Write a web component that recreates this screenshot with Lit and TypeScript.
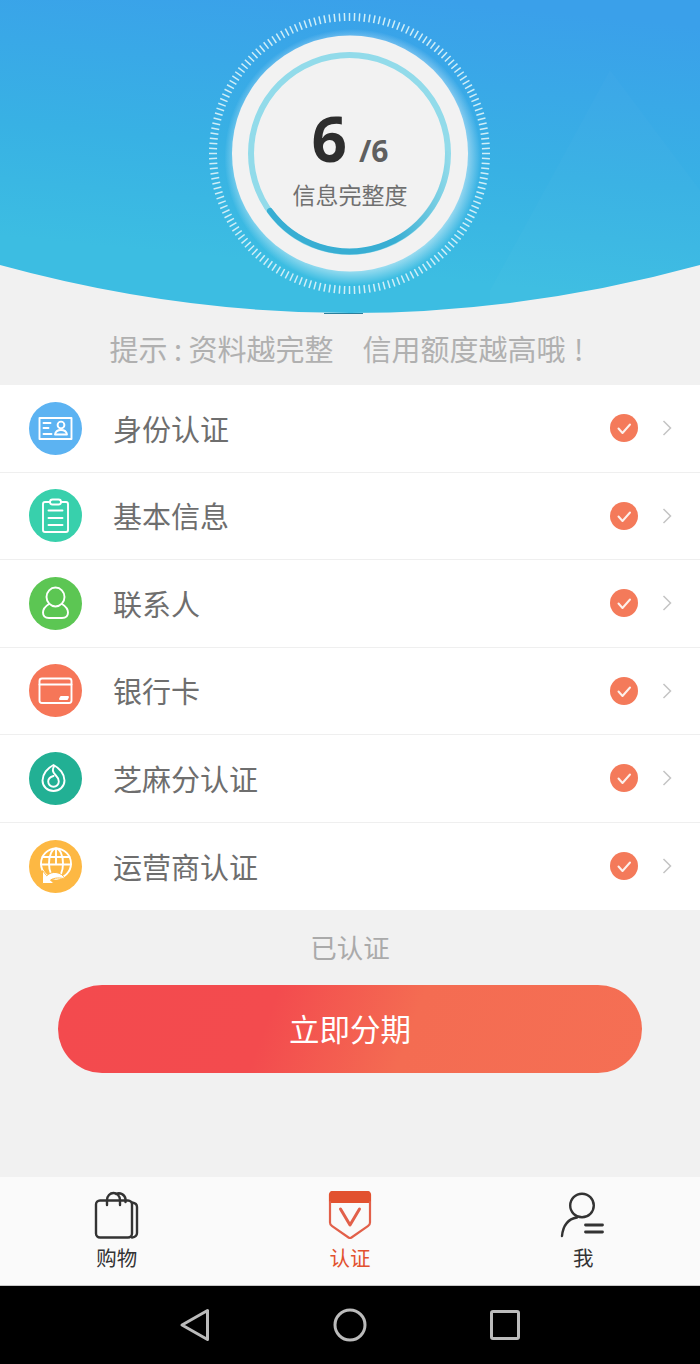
import { LitElement, html, css, svg } from 'lit';
import { customElement } from 'lit/decorators.js';

const rows = [
  {
    name: '身份认证',
    color: '#5cb3f2',
    icon: svg`<rect x="10.5" y="16" width="32" height="21" />
      <path d="M14.5 21h7M14.5 26h5M14.5 32h8" />
      <circle cx="32" cy="23" r="3.4" />
      <path d="M26 32.500c.5-3 3-4.500 6-4.500s5.500 1.500 6 4.500z" />`,
  },
  {
    name: '基本信息',
    color: '#38d0ac',
    icon: svg`<path d="M21 13h-5a2 2 0 0 0-2 2v26a2 2 0 0 0 2 2h21a2 2 0 0 0 2-2V15a2 2 0 0 0-2-2h-5" />
      <rect x="21" y="10.500" width="11" height="5" rx="2.500" />
      <path d="M19.500 21.500h14M19.500 29h14M19.500 36h14" />`,
  },
  {
    name: '联系人',
    color: '#5cc653',
    icon: svg`<ellipse cx="26.500" cy="20" rx="9" ry="9.500" />
      <path d="M20 27c-4 2.500-6 5.500-6 8.500 0 3.500 2.500 5.500 6 5.500h13c3.500 0 6-2 6-5.500 0-3-2-6-6-8.500" />`,
  },
  {
    name: '银行卡',
    color: '#f67658',
    icon: svg`<rect x="10.500" y="14.500" width="32" height="24.500" rx="2.500" />
      <path d="M10.500 20.500h32" />
      <path d="M31 35l1-2h7l-1 2z" style="fill:#fff" />`,
  },
  {
    name: '芝麻分认证',
    color: '#22b094',
    icon: svg`<path d="M24.500 13c6 3 11 9 11 15.500 0 6-5 10.500-11 10.500s-11-4.500-11-10.500C13.500 22 18.500 16 24.500 13z" />
      <path d="M25 14.500c-2.500 3.500-.5 6.500 1.500 8.500 2 2 3.300 4 3.300 6.500a5.300 5.300 0 0 1-10.600 0c0-2.300 2-4.500 5.300-5.500" />`,
  },
  {
    name: '运营商认证',
    color: '#fdb843',
    icon: svg`<circle cx="27" cy="23.500" r="15" />
      <ellipse cx="27" cy="23.500" rx="7" ry="15" />
      <path d="M27 8.500v15M13.500 17h27M12 24.500h30" />
      <path d="M13.500 31v12.500h11.500l-3.500-3.500c4-2.500 10-2.500 14.500-1-1.500-3.500-4.500-6-9-6.500-3.500-.3-6.500.5-9 3z" style="fill:#fff;stroke:#fdb843;stroke-width:1" />`,
  },
];

const ticks = Array.from({ length: 172 }, (_, i) => (i * 360) / 172);

@customElement('app-root')
export class AppRoot extends LitElement {
  static styles = css`
    :host {
      display: flex;
      flex-direction: column;
      width: 700px;
      height: 1364px;
      background: #f1f1f1;
      font-family: 'Noto Sans CJK SC', 'Noto Sans', sans-serif;
      overflow: hidden;
    }

    .hero {
      position: relative;
      height: 314px;
      flex: none;
    }

    .hero__bg {
      position: absolute;
      inset: 0;
      display: block;
    }

    .hero__dash {
      position: absolute;
      left: 324px;
      bottom: 0;
      width: 39px;
      height: 1px;
      background: #2b7f9c;
    }

    .gauge {
      position: absolute;
      inset: 0;
      display: flex;
      flex-direction: column;
      align-items: center;
      padding-top: 103px;
      box-sizing: border-box;
    }

    .gauge__score {
      display: flex;
      align-items: baseline;
      height: 70px;
      font-family: 'Open Sans', sans-serif;
      font-weight: 700;
      line-height: 70px;
    }

    .gauge__value {
      font-size: 62px;
      color: #2d2d2d;
    }

    .gauge__total {
      font-size: 30px;
      margin-left: 12px;
      color: #5f5f5f;
    }

    .gauge__label {
      font-size: 23px;
      line-height: 30px;
      margin-top: 6px;
      color: #707070;
    }

    .tip {
      height: 71px;
      box-sizing: border-box;
      padding: 0 7px 3px 0;
      display: flex;
      justify-content: center;
      align-items: center;
      gap: 29px;
      font-size: 29px;
      color: #b0b0b0;
      white-space: pre;
      flex: none;
    }

    .tip__end {
      word-spacing: 2px;
    }

    .list {
      flex: none;
      background: #fff;
    }

    .row {
      height: 87.500px;
      box-sizing: border-box;
      display: flex;
      align-items: center;
      padding: 0 28px 0 29px;
      border-bottom: 1px solid #efefef;
    }

    .row:last-child {
      border-bottom: none;
    }

    .row__icon {
      width: 53px;
      height: 53px;
      flex: none;
      display: block;
    }

    .row__icon path,
    .row__icon rect,
    .row__icon circle,
    .row__icon ellipse {
      fill: none;
      stroke: #fff;
      stroke-width: 1.900;
      stroke-linecap: round;
      stroke-linejoin: round;
    }

    .row__name {
      flex: 1;
      margin-left: 31px;
      padding-bottom: 1px;
      font-size: 29px;
      color: #6e6e6e;
    }

    .row__check {
      width: 28px;
      height: 28px;
      flex: none;
      display: block;
    }

    .row__chevron {
      width: 10px;
      height: 16px;
      flex: none;
      margin-left: 24px;
      display: block;
    }

    .status {
      height: 75px;
      box-sizing: border-box;
      padding-bottom: 2px;
      flex: none;
      display: flex;
      align-items: center;
      justify-content: center;
      font-size: 26.500px;
      color: #aaa;
    }

    .apply {
      flex: none;
      width: 584px;
      height: 88px;
      box-sizing: border-box;
      padding-bottom: 2px;
      margin-left: 58px;
      border-radius: 44px;
      background: linear-gradient(110deg, #f34a4e 0%, #f34b4e 36%, #f46c52 60%, #f56f54 100%);
      color: #fff;
      display: flex;
      align-items: center;
      justify-content: center;
      font-size: 30.500px;
    }

    .tabs {
      margin-top: 104px;
      flex: none;
      height: 109px;
      box-sizing: border-box;
      background: #fafafa;
      border-bottom: 1px solid #c8c8c8;
      display: grid;
      grid-template-columns: repeat(3, 1fr);
    }

    .tab {
      display: flex;
      flex-direction: column;
      align-items: center;
      padding-top: 14px;
      font-size: 20.500px;
      line-height: 26px;
      color: #333;
    }

    .tab--active {
      color: #e2512f;
    }

    .tab svg {
      display: block;
      width: 50px;
      height: 50px;
      margin-bottom: 3px;
    }

    .nav {
      flex: 1;
      background: #000;
      display: flex;
      align-items: center;
      justify-content: center;
      gap: 107px;
    }

    .nav svg {
      display: block;
      width: 48px;
      height: 48px;
    }
  `;

  renderHero() {
    return html`
      <svg class="hero__bg" width="700" height="314" viewBox="0 0 700 314">
        <defs>
          <linearGradient id="sky" x1="0.62" y1="0" x2="0.4" y2="1">
            <stop offset="0" stop-color="#3aa0ea" />
            <stop offset="0.5" stop-color="#38b1e4" />
            <stop offset="0.85" stop-color="#3cbde2" />
          </linearGradient>
          <linearGradient id="arc" gradientUnits="userSpaceOnUse" x1="262" y1="200" x2="452" y2="170">
            <stop offset="0" stop-color="#38aed3" />
            <stop offset="0.65" stop-color="#38aed3" />
            <stop offset="1" stop-color="#38aed3" stop-opacity="0" />
          </linearGradient>
          <radialGradient id="halo" gradientUnits="userSpaceOnUse" cx="352.500" cy="157" r="128">
            <stop offset="0.86" stop-color="#fff" stop-opacity="0.6" />
            <stop offset="1" stop-color="#fff" stop-opacity="0" />
          </radialGradient>
        </defs>
        <path d="M0 0H700V265Q350 361 0 265Z" fill="url(#sky)" />
        <path d="M490 290L610 70L700 190V265Q590 296 490 308Z" fill="#fff" opacity="0.015" />
        <circle cx="352.500" cy="157" r="128" fill="url(#halo)" />
        ${ticks.map(
          (deg) => svg`<line x1="349.500" y1="13" x2="349.500" y2="21" stroke="#cfeef8" stroke-width="1.500"
            transform="rotate(${deg} 349.500 153.500)" />`,
        )}
        <circle cx="350" cy="153.500" r="118" fill="#f2f2f2" />
        <circle cx="349.500" cy="153.500" r="98.500" fill="none" stroke="#92dbea" stroke-width="6" />
        <path d="M270 211A98.500 98.500 0 0 0 448 153.500" fill="none" stroke="url(#arc)" stroke-width="6" stroke-linecap="round" />
      </svg>
      <div class="hero__dash"></div>
      <div class="gauge">
        <div class="gauge__score">
          <span class="gauge__value">6</span>
          <span class="gauge__total">/6</span>
        </div>
        <div class="gauge__label">信息完整度</div>
      </div>
    `;
  }

  renderRow(row: (typeof rows)[number]) {
    return html`
      <div class="row">
        <svg class="row__icon" viewBox="0 0 53 53">
          <circle cx="26.500" cy="26.500" r="26.500" style="fill:${row.color};stroke:none" />
          ${row.icon}
        </svg>
        <div class="row__name">${row.name}</div>
        <svg class="row__check" viewBox="0 0 28 28">
          <circle cx="14" cy="14" r="14" fill="#f47a5a" />
          <path d="M8.500 14.500l4 4.500 7.500-8.500" fill="none" stroke="#fdf1ec" stroke-width="2" stroke-linecap="round" stroke-linejoin="round" />
        </svg>
        <svg class="row__chevron" viewBox="0 0 10 16">
          <path d="M1.500 1l7 7-7 7" fill="none" stroke="#c4c4c4" stroke-width="1.500" />
        </svg>
      </div>
    `;
  }

  render() {
    return html`
      <div class="hero">${this.renderHero()}</div>
      <div class="tip"><span>提示 : 资料越完整</span><span class="tip__end">信用额度越高哦 !</span></div>
      <div class="list">${rows.map((row) => this.renderRow(row))}</div>
      <div class="status">已认证</div>
      <div class="apply">立即分期</div>
      <div class="tabs">
        <div class="tab">
          <svg viewBox="0 0 50 50" fill="none" stroke="#333" stroke-width="2.400" stroke-linecap="round" stroke-linejoin="round">
            <rect x="4" y="9.500" width="36" height="37" rx="4" />
            <path d="M40 11.500c3.500.5 5 2 5 4.500v26c0 2.500-1.500 4-5 4.500" />
            <path d="M15 14V9c0-4 3-7 6.500-7S28 5 28 9v5M24 3c4-2 9 .5 9.500 5v3" />
          </svg>
          购物
        </div>
        <div class="tab tab--active">
          <svg viewBox="0 0 50 50" fill="none" stroke="#e2604a" stroke-width="2.200" stroke-linecap="round" stroke-linejoin="round">
            <path d="M5 3.500A2.500 2.500 0 0 1 7.500 1h35A2.500 2.500 0 0 1 45 3.500V11H5z" fill="#e2512f" stroke="#e2512f" />
            <path d="M5 11v20.500c0 1.500.5 2.500 1.800 3.300L23.500 46.500c1 .6 2 .6 3 0L43.200 34.800c1.300-.8 1.800-1.800 1.800-3.300V11" />
            <path d="M15.500 18L25 34l9.500-16" stroke-width="3" />
          </svg>
          认证
        </div>
        <div class="tab">
          <svg viewBox="0 0 50 50" fill="none" stroke="#333" stroke-width="2.400" stroke-linecap="round">
            <circle cx="24" cy="14.500" r="11.800" />
            <path d="M19 26.500C10 28 5 35 4 45" />
            <path d="M27.500 34h17M27.500 41h17" stroke-width="2.800" />
          </svg>
          我
        </div>
      </div>
      <div class="nav">
        <svg viewBox="0 0 48 48" fill="none" stroke="#bbb" stroke-width="3" stroke-linejoin="round">
          <path d="M36.500 9.500v29L11 24z" />
        </svg>
        <svg viewBox="0 0 48 48" fill="none" stroke="#bbb" stroke-width="3">
          <circle cx="24" cy="24" r="15" />
        </svg>
        <svg viewBox="0 0 48 48" fill="none" stroke="#bbb" stroke-width="3" stroke-linejoin="round">
          <rect x="10.500" y="10.500" width="27" height="27" rx="1.500" />
        </svg>
      </div>
    `;
  }
}
